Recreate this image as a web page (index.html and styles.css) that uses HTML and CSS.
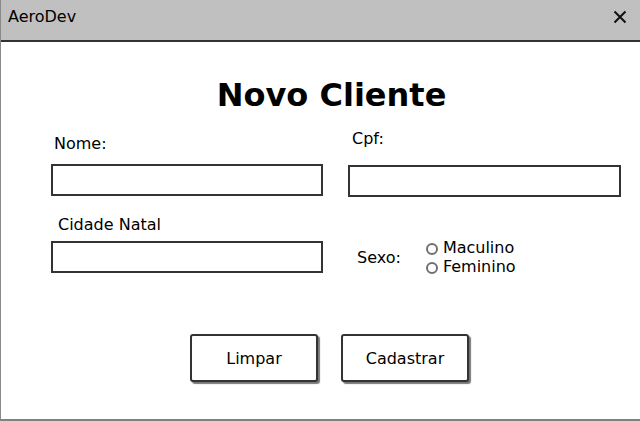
FILE: index.html
```html
<!DOCTYPE html>
<html lang="pt">
<head>
<meta charset="utf-8">
<title>AeroDev</title>
<link rel="stylesheet" href="styles.css">
</head>
<body>
<div class="window">
  <div class="titlebar">
    <span class="app-name">AeroDev</span>
    <svg class="close" width="14" height="14" viewBox="0 0 14 14"><path d="M1.5 1.5 L12.5 12.5 M12.5 1.5 L1.5 12.5" stroke="#111" stroke-width="2" fill="none"/></svg>
  </div>
  <div class="content">
    <h1 class="heading">Novo Cliente</h1>
    <div class="form-grid">
      <div class="field field-nome">
        <label class="label label-nome">Nome:</label>
        <input class="text-input input-nome" type="text">
      </div>
      <div class="field field-cpf">
        <label class="label label-cpf">Cpf:</label>
        <input class="text-input input-cpf" type="text">
      </div>
      <div class="field field-cidade">
        <label class="label label-cidade">Cidade Natal</label>
        <input class="text-input input-cidade" type="text">
      </div>
      <div class="field field-sexo">
        <span class="label label-sexo">Sexo:</span>
        <div class="radio-group">
          <label class="radio-option"><input class="radio" type="radio" name="sexo"><span>Maculino</span></label>
          <label class="radio-option"><input class="radio" type="radio" name="sexo"><span>Feminino</span></label>
        </div>
      </div>
    </div>
    <div class="actions">
      <button class="btn" type="button">Limpar</button>
      <button class="btn" type="button">Cadastrar</button>
    </div>
  </div>
</div>
</body>
</html>
```

FILE: styles.css
```css
* { box-sizing: border-box; }
html, body { margin: 0; padding: 0; background: #fff; }
body {
  font-family: "DejaVu Sans", "Liberation Sans", sans-serif;
  font-size: 16px;
  line-height: 19px;
  color: #000;
}
.window {
  width: 640px;
  height: 421px;
  border-left: 1px solid #8a8a8a;
  border-bottom: 2px solid #808080;
  display: flex;
  flex-direction: column;
}
.titlebar {
  height: 42px;
  background: #c0c0c0;
  border-bottom: 2px solid #333;
  display: flex;
  align-items: center;
  justify-content: space-between;
  padding: 0 13px 7px 7px;
  flex: none;
}
.app-name {
  font-size: 16px;
}
.close { display: block; }
.content {
  flex: 1;
  display: flex;
  flex-direction: column;
}
.heading {
  margin: 34px 0 0 22px;
  text-align: center;
  font-size: 32px;
  line-height: 38px;
  font-weight: bold;
}
.form-grid {
  margin: 15px 0 0 50px;
  display: grid;
  grid-template-columns: 272px 273px;
  column-gap: 25px;
  align-items: start;
}
.field {
  display: flex;
  flex-direction: column;
  align-items: flex-start;
}
.label { display: block; }
.label-nome { margin-top: 5px; padding-left: 3px; }
.label-cpf { padding-left: 4px; }
.label-cidade { margin-top: 18px; padding-left: 7px; }
.text-input {
  width: 100%;
  height: 32px;
  border: 2px solid #333;
  border-radius: 0;
  background: #fff;
  margin: 0;
  padding: 0 4px;
  font: inherit;
  outline: none;
}
.input-nome { margin-top: 11px; }
.input-cpf { margin-top: 17px; }
.input-cidade { margin-top: 7px; }
.field-sexo {
  flex-direction: row;
  align-items: center;
  margin-top: 41px;
  padding-left: 9px;
}
.radio-group {
  display: flex;
  flex-direction: column;
  margin-left: 25px;
}
.radio-option {
  display: flex;
  align-items: center;
  gap: 5px;
}
.radio {
  appearance: none;
  -webkit-appearance: none;
  width: 12px;
  height: 12px;
  margin: 2px 0 0 0;
  border: 2px solid #707070;
  border-radius: 50%;
  background: #fff;
}
.actions {
  display: flex;
  justify-content: center;
  gap: 23px;
  margin-top: 58px;
  padding-left: 18px;
}
.btn {
  width: 128px;
  height: 48px;
  border: 2px solid #333;
  border-radius: 3px;
  background: #fff;
  box-shadow: 2px 2px 1px #777;
  font: inherit;
  color: #000;
  padding: 0;
}
```
